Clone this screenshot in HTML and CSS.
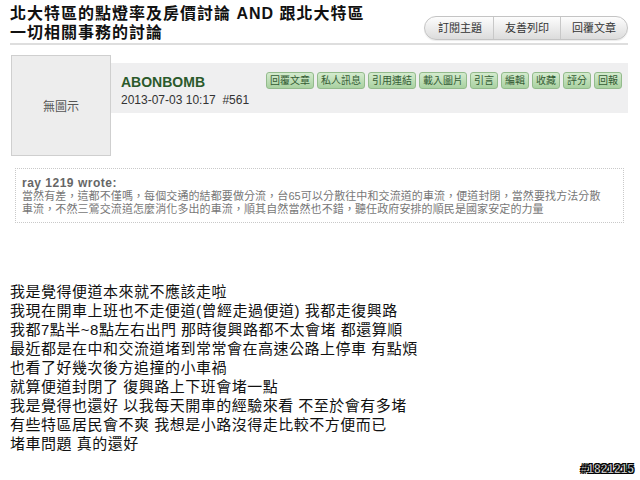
FILE: index.html
```html
<!DOCTYPE html>
<html lang="zh-Hant">
<head>
    <meta charset="UTF-8">
    <title>北大特區的點燈率及房價討論</title>
    <link rel="stylesheet" href="styles.css">
</head>
<body>
    <div class="page">
        <!-- Topic title and tools -->
        <div class="topic-head">
            <h1 class="topic-title">北大特區的點燈率及房價討論 <span class="latin">AND</span> 跟北大特區<br>一切相關事務的討論</h1>
            <div class="topic-tools">
                <a class="tool">訂閱主題</a>
                <a class="tool">友善列印</a>
                <a class="tool">回覆文章</a>
            </div>
        </div>

        <!-- Post -->
        <div class="post">
            <div class="avatar">無圖示</div>
            <div class="post-bar">
                <div class="post-meta">
                    <div class="author">ABONBOMB</div>
                    <div class="post-date">2013-07-03 10:17&nbsp; #561</div>
                </div>
                <div class="post-actions">
                    <a class="act">回覆文章</a>
                    <a class="act">私人訊息</a>
                    <a class="act">引用連結</a>
                    <a class="act">載入圖片</a>
                    <a class="act">引言</a>
                    <a class="act">編輯</a>
                    <a class="act">收藏</a>
                    <a class="act">評分</a>
                    <a class="act">回報</a>
                </div>
            </div>
        </div>

        <div class="quote">
            <div class="quote-who">ray 1219 wrote:</div>
            <div class="quote-text">當然有差，這都不僅嗎，每個交通的結都要做分流，台65可以分散往中和交流道的車流，便道封閉，當然要找方法分散<br>車流，不然三鶯交流道怎麼消化多出的車流，順其自然當然也不錯，聽任政府安排的順民是國家安定的力量</div>
        </div>

        <div class="post-body">
            我是覺得便道本來就不應該走啦<br>
            我現在開車上班也不走便道(曾經走過便道) 我都走復興路<br>
            我都7點半~8點左右出門 那時復興路都不太會堵 都還算順<br>
            最近都是在中和交流道堵到常常會在高速公路上停車 有點煩<br>
            也看了好幾次後方追撞的小車禍<br>
            就算便道封閉了 復興路上下班會堵一點<br>
            我是覺得也還好 以我每天開車的經驗來看 不至於會有多堵<br>
            有些特區居民會不爽 我想是小路沒得走比較不方便而已<br>
            堵車問題 真的還好
        </div>
    </div>

    <div class="mark">#1821215</div>
</body>
</html>
```

FILE: styles.css
```css
/* Page */
body {
    margin: 0;
    padding: 0;
    background-color: #fff;
    color: #111;
    font-family: "Liberation Sans", "Noto Sans CJK TC", sans-serif;
}
.page {
    width: 618px;
    padding: 0 12px 0 10px;
}

/* Topic head */
.topic-head {
    display: flex;
    justify-content: space-between;
    align-items: flex-end;
    padding-top: 4px;
    border-bottom: 2px solid #dedede;
}
.topic-title {
    margin: 0 0 1px 0;
    font-size: 16px;
    line-height: 19px;
    letter-spacing: 1px;
    font-weight: bold;
    color: #111;
}
.topic-title .latin {
    font-family: "Liberation Sans", sans-serif;
}
.topic-tools {
    display: flex;
    margin-bottom: 3px;
    border: 1px solid #c4c4c4;
    border-radius: 12px;
    overflow: hidden;
    background: linear-gradient(#fdfdfd, #dcdcdc);
    box-shadow: 0 1px 1px rgba(0, 0, 0, 0.08);
}
.tool {
    height: 22px;
    line-height: 22px;
    padding: 0 11px;
    font-size: 11px;
    color: #333;
    border-left: 1px solid #c8c8c8;
}
.tool:first-child {
    border-left: none;
    padding-left: 13px;
}
.tool:last-child {
    padding-right: 11px;
}

/* Post */
.post {
    display: flex;
    margin-top: 10px;
}
.avatar {
    width: 98px;
    height: 99px;
    margin-left: 1px;
    border: 1px solid #cfcfcf;
    background-color: #ededed;
    display: flex;
    align-items: center;
    justify-content: center;
    font-size: 12px;
    color: #555;
}
.post-bar {
    flex: 1;
    display: flex;
    justify-content: space-between;
    align-items: flex-start;
    margin-top: 8px;
    height: 50px;
    background-color: #efeff0;
}
.post-meta {
    padding: 10px 0 0 10px;
}
.author {
    font-size: 14px;
    line-height: 18px;
    font-weight: bold;
    color: #2b5a2b;
}
.post-date {
    margin-top: 1px;
    font-size: 12px;
    line-height: 16px;
    color: #333;
}
.post-actions {
    display: flex;
    gap: 3px;
    margin: 9px 6px 0 0;
}
.act {
    height: 15px;
    line-height: 15px;
    padding: 0 3px;
    font-size: 10px;
    color: #345c34;
    border: 1px solid #93bb8c;
    border-radius: 3px;
    background: linear-gradient(#d4ebce, #a9d1a1);
}

/* Quote */
.quote {
    margin: 12px 4px 0 5px;
    padding: 7px 6px 6px 6px;
    border: 1px dotted #c9c9c9;
    color: #777;
}
.quote-who {
    font-size: 12px;
    line-height: 14px;
    font-weight: bold;
    letter-spacing: 0.5px;
    color: #666;
}
.quote-text {
    font-size: 11px;
    line-height: 13px;
    letter-spacing: 0.1px;
    white-space: nowrap;
}

/* Body */
.post-body {
    margin-top: 59px;
    font-size: 15px;
    line-height: 19px;
    letter-spacing: 0.5px;
    color: #111;
}

.mark {
    position: absolute;
    right: 6px;
    top: 462px;
    font-size: 12px;
    font-weight: bold;
    color: #fff;
    -webkit-text-stroke: 0.6px #000;
    text-shadow: 1px 1px 0 #000, -1px -1px 0 #000, 1px -1px 0 #000, -1px 1px 0 #000;
}
```
